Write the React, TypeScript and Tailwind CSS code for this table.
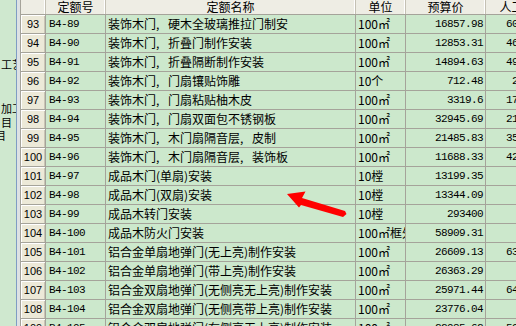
import React from 'react';

const CJK = { fontFamily: "'Noto Sans CJK SC', 'Noto Sans', sans-serif" };
const MONO = { fontFamily: "'Liberation Mono', 'Noto Sans CJK SC', monospace" };
const SANS = { fontFamily: "'Liberation Sans', Arial, sans-serif" };

const ROWS: [string, string, string, string, string, string][] = [
  ['93', 'B4-89', '装饰木门, 硬木全玻璃推拉门制安', '100㎡', '16857.98', '6032.15'],
  ['94', 'B4-90', '装饰木门, 折叠门制作安装', '100㎡', '12853.31', '4621.40'],
  ['95', 'B4-91', '装饰木门, 折叠隔断制作安装', '100㎡', '14894.63', '4938.72'],
  ['96', 'B4-92', '装饰木门, 门扇镶贴饰雕', '10个', '712.48', '231.60'],
  ['97', 'B4-93', '装饰木门, 门扇粘贴柚木皮', '100㎡', '3319.6', '1728.30'],
  ['98', 'B4-94', '装饰木门, 门扇双面包不锈钢板', '100㎡', '32945.69', '2154.96'],
  ['99', 'B4-95', '装饰木门, 木门扇隔音层, 皮制', '100㎡', '21485.83', '3511.20'],
  ['100', 'B4-96', '装饰木门, 木门扇隔音层, 装饰板', '100㎡', '11688.33', '4236.48'],
  ['101', 'B4-97', '成品木门(单扇)安装', '10樘', '13199.35', ''],
  ['102', 'B4-98', '成品木门(双扇)安装', '10樘', '13344.09', ''],
  ['103', 'B4-99', '成品木转门安装', '10樘', '293400', ''],
  ['104', 'B4-100', '成品木防火门安装', '100㎡框外围面积', '58909.31', ''],
  ['105', 'B4-101', '铝合金单扇地弹门(无上亮)制作安装', '100㎡', '26609.13', '6318.24'],
  ['106', 'B4-102', '铝合金单扇地弹门(带上亮)制作安装', '100㎡', '26363.29', ''],
  ['107', 'B4-103', '铝合金双扇地弹门(无侧亮无上亮)制作安装', '100㎡', '25971.44', '6452.16'],
  ['108', 'B4-104', '铝合金双扇地弹门(无侧亮带上亮)制作安装', '100㎡', '23776.04', ''],
  ['109', 'B4-105', '铝合金双扇地弹门(有侧亮无上亮)制作安装', '100㎡', '22985.62', '5907.36'],
];

// SimSun-style ", " is one full cell wide
function Name({ text }: { text: string }) {
  const parts = text.split(', ');
  return (
    <>
      {parts.map((p, i) => (
        <React.Fragment key={i}>
          {i > 0 && <span className="inline-block w-[12px]">,</span>}
          {p}
        </React.Fragment>
      ))}
    </>
  );
}

function SidePane() {
  return (
    <div className="flex w-[16px] shrink-0 flex-col overflow-hidden whitespace-nowrap bg-[#cfe8cf] pt-[58px] text-[11px] leading-[12px] text-black" style={CJK}>
      <div className="pl-px">工艺</div>
      <div className="mt-[32px] pl-px">加工</div>
      <div className="mt-[2px] pl-px">目</div>
      <div className="-ml-[5px] mt-px">目</div>
    </div>
  );
}

function HeaderRow() {
  const hd = 'flex h-full shrink-0 items-center justify-center overflow-hidden whitespace-nowrap border-r border-[#c4c1b4] shadow-[inset_-1px_0_0_#fff]';
  return (
    <div className="flex h-[15px] shrink-0 border-b border-[#a5a39a] bg-[#eeede4] text-[12px] leading-[14px] text-black" style={CJK}>
      <div className={`${hd} w-[25px]`} />
      <div className={`${hd} w-[60px]`}>定额号</div>
      <div className={`${hd} w-[250px]`}>定额名称</div>
      <div className={`${hd} w-[50px]`}>单位</div>
      <div className={`${hd} w-[80px]`}>预算价</div>
      <div className={`${hd} w-[64px]`}>人工费</div>
    </div>
  );
}

function Row({ r }: { r: (typeof ROWS)[number] }) {
  const [no, code, name, unit, price, labor] = r;
  const cell = 'flex h-full shrink-0 items-center overflow-hidden whitespace-nowrap border-r border-[#a5a39a]';
  return (
    <div className="flex h-[19px] shrink-0 border-b border-[#a5a39a] bg-[#cce8cc] text-black">
      <div
        className={`${cell} w-[25px] justify-center bg-[#ece9d8] text-[11px] shadow-[inset_1px_1px_0_#fff,inset_-1px_0_0_#c9c5b5]`}
        style={SANS}
      >
        {no}
      </div>
      <div className={`${cell} w-[60px] pl-[3px] text-[11px] tracking-[-0.6px]`} style={MONO}>
        {code}
      </div>
      <div className={`${cell} w-[250px] pl-[2px] text-[12px]`} style={CJK}>
        <Name text={name} />
      </div>
      <div className={`${cell} w-[50px] pl-[2px] text-[12px]`} style={CJK}>
        {unit}
      </div>
      <div className={`${cell} w-[80px] justify-end pr-[2px] text-[11px] tracking-[-0.6px]`} style={MONO}>
        {price}
      </div>
      <div className={`${cell} w-[64px] justify-end pr-[1px] text-[11px] tracking-[-0.6px]`} style={MONO}>
        {labor}
      </div>
    </div>
  );
}

export default function App() {
  return (
    <div className="relative flex h-[326px] w-[516px] overflow-hidden bg-[#cce8cc]">
      <SidePane />
      <div className="w-px shrink-0 bg-[#7f9dc4]" />
      <div className="w-[3px] shrink-0 bg-[#dde2e4]" />
      <div className="flex min-w-0 flex-1 flex-col border-l border-[#a5a39a]">
        <HeaderRow />
        {ROWS.map((r) => (
          <Row key={r[0]} r={r} />
        ))}
      </div>

      {/* red annotation arrow */}
      <svg className="pointer-events-none absolute left-0 top-0" width="516" height="326" viewBox="0 0 516 326">
        <polygon
          points="287,194 305.5,191.5 302,198 345,211 346.5,214 343,217 301,205 299,207.5"
          fill="#ff0000"
        />
      </svg>
    </div>
  );
}
